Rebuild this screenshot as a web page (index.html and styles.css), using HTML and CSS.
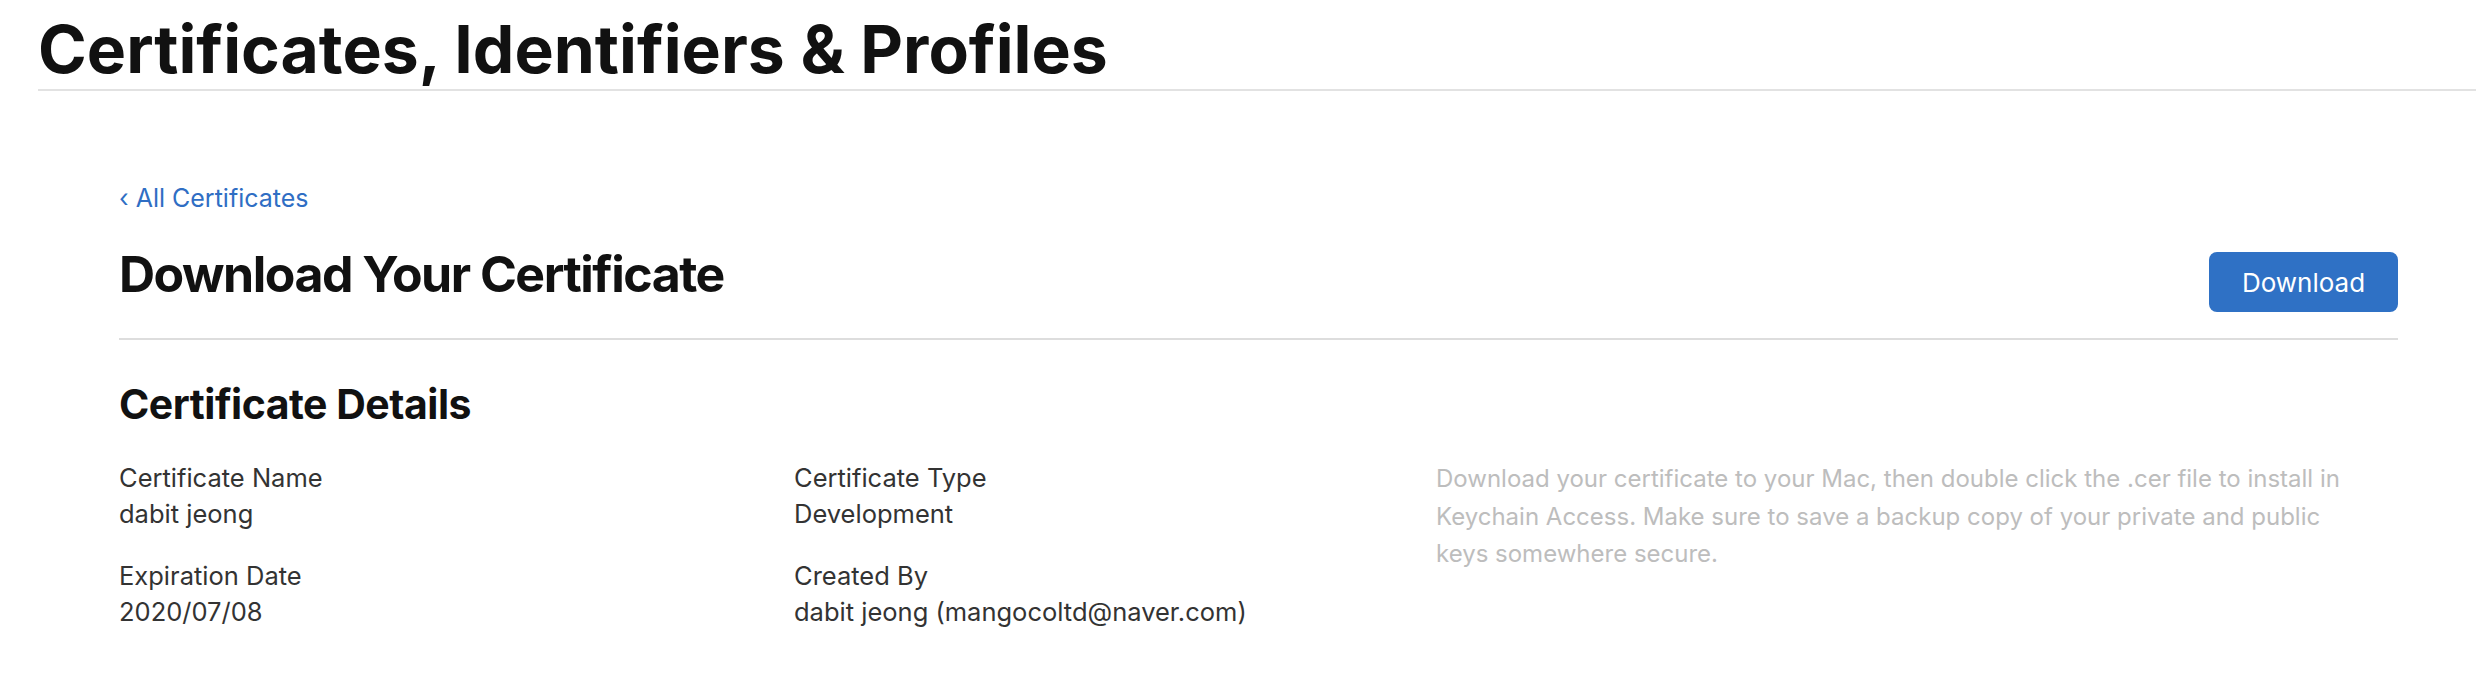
FILE: index.html
```html
<!DOCTYPE html>
<html lang="en">
<head>
<meta charset="utf-8">
<title>Certificates, Identifiers &amp; Profiles</title>
<link rel="stylesheet" href="styles.css">
</head>
<body>
<header class="site-header">
  <h1 class="site-title">Certificates, Identifiers &amp; Profiles</h1>
</header>
<main class="content">
  <a class="back-link" href="#"><span class="chev">‹</span> All Certificates</a>
  <div class="page-head">
    <h2 class="page-title">Download Your Certificate</h2>
    <button class="btn-primary" type="button">Download</button>
  </div>
  <section class="details">
    <h3 class="section-title">Certificate Details</h3>
    <div class="details-grid">
      <div class="col">
        <div class="field">
          <div class="field-label">Certificate Name</div>
          <div class="field-value">dabit jeong</div>
        </div>
        <div class="field">
          <div class="field-label">Expiration Date</div>
          <div class="field-value">2020/07/08</div>
        </div>
      </div>
      <div class="col">
        <div class="field">
          <div class="field-label">Certificate Type</div>
          <div class="field-value">Development</div>
        </div>
        <div class="field">
          <div class="field-label">Created By</div>
          <div class="field-value">dabit jeong (mangocoltd@naver.com)</div>
        </div>
      </div>
      <p class="hint">Download your certificate to your Mac, then double click the .cer file to install in<br>Keychain Access. Make sure to save a backup copy of your private and public<br>keys somewhere secure.</p>
    </div>
  </section>
</main>
</body>
</html>
```
FILE: styles.css
```css
html, body {
  margin: 0;
  padding: 0;
  background: #ffffff;
}
body {
  font-family: Inter, "Liberation Sans", Arial, sans-serif;
  color: #333333;
}
.site-header {
  margin: 0 14px 0 38px;
  padding-top: 9px;
  border-bottom: 2px solid #e2e2e2;
}
.site-title {
  margin: 0;
  font-size: 66px;
  line-height: 80px;
  font-weight: 700;
  color: #111111;
}
.content {
  padding: 89px 92px 0 119px;
}
.back-link {
  display: block;
  font-size: 25px;
  line-height: 36px;
  color: #2f6ec4;
  text-decoration: none;
}
.page-head {
  display: flex;
  justify-content: space-between;
  align-items: flex-start;
  margin-top: 28px;
  padding-bottom: 26px;
  border-bottom: 2px solid #dddddd;
}
.page-title {
  margin: 0;
  font-size: 50px;
  line-height: 60px;
  font-weight: 700;
  color: #111111;
  letter-spacing: -1.5px;
}
.btn-primary {
  margin-top: 8px;
  width: 189px;
  height: 60px;
  border: none;
  border-radius: 8px;
  background: #2f71c5;
  color: #ffffff;
  font-family: inherit;
  font-size: 26px;
  padding: 0;
}
.section-title {
  margin: 39px 0 0;
  font-size: 41px;
  line-height: 50px;
  font-weight: 700;
  color: #111111;
  letter-spacing: -0.5px;
}
.details-grid {
  display: grid;
  grid-template-columns: 675px 642px 1fr;
  margin-top: 31px;
}
.field + .field {
  margin-top: 26px;
}
.field-label,
.field-value {
  font-size: 25.5px;
  line-height: 36px;
  color: #333333;
}
.hint {
  margin: 0;
  font-size: 24px;
  line-height: 37.5px;
  color: #bdbdbd;
}
```
